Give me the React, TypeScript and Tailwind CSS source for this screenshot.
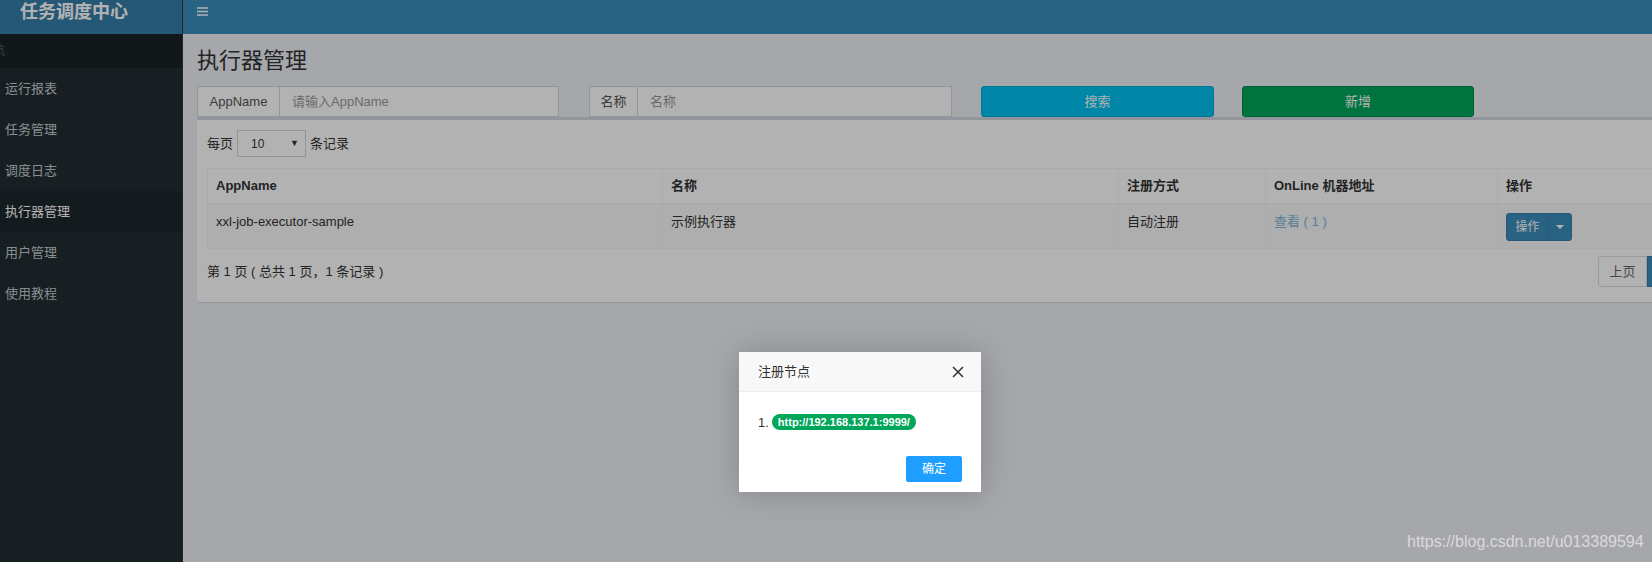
import React from 'react';

const menu = ['运行报表', '任务管理', '调度日志', '执行器管理', '用户管理', '使用教程'];

function Sidebar() {
  return (
    <aside className="flex w-[183px] shrink-0 flex-col border-r border-[#2e3a40] bg-[#222d32]">
      <div className="flex h-[34px] items-start bg-[#367fa9] pl-[20px] pt-[1px]">
        <span className="text-[18px] font-bold leading-[22px] text-white">任务调度中心</span>
      </div>
      <div className="flex h-[34px] items-center bg-[#1a2226]">
        <span className="ml-[-19px] text-[12px] text-[#4b646f]">导航</span>
      </div>
      {menu.map((m) => {
        const active = m === '执行器管理';
        return (
          <div
            key={m}
            className={
              active
                ? 'flex h-[41px] items-center bg-[#1e282c] pl-[5px] text-[13px] text-white'
                : 'flex h-[41px] items-center pl-[5px] text-[13px] text-[#c2ccd1]'
            }
          >
            {m}
          </div>
        );
      })}
    </aside>
  );
}

function InputGroup({ addon, placeholder, width, addonWidth }: { addon: string; placeholder: string; width: string; addonWidth: string }) {
  return (
    <div className={`flex h-[31px] ${width} border border-[#d2d6de] bg-white text-[13px]`}>
      <div className={`flex ${addonWidth} shrink-0 items-center justify-center border-r border-[#d2d6de] text-[#555]`}>
        {addon}
      </div>
      <div className="flex flex-1 items-center pl-[12px] text-[#999]">{placeholder}</div>
    </div>
  );
}

function ExecutorTable() {
  const th = 'border border-[#f4f4f4] px-[8px] py-[7px] text-left align-bottom font-bold';
  const td = 'border border-[#f4f4f4] px-[8px] pt-[7px] pb-[7px] align-top';
  return (
    <table className="w-[1519px] table-fixed border-collapse border border-[#f4f4f4] text-[13px] text-[#333]">
      <colgroup>
        <col className="w-[455px]" />
        <col className="w-[456px]" />
        <col className="w-[147px]" />
        <col className="w-[232px]" />
        <col className="w-[229px]" />
      </colgroup>
      <thead>
        <tr className="h-[34px] border-b-2 border-[#f4f4f4]">
          <th className={th}>AppName</th>
          <th className={th}>名称</th>
          <th className={th}>注册方式</th>
          <th className={th}>OnLine 机器地址</th>
          <th className={th}>操作</th>
        </tr>
      </thead>
      <tbody>
        <tr className="h-[45px] bg-[#f9f9f9]">
          <td className={td}>xxl-job-executor-sample</td>
          <td className={td}>示例执行器</td>
          <td className={td}>自动注册</td>
          <td className={td}>
            <span className="text-[#7fb6dc]">查看 ( 1 )</span>
          </td>
          <td className="border border-[#f4f4f4] px-[8px] pt-[8px] align-top">
            <div className="flex h-[28px] w-[66px] overflow-hidden rounded-[3px] border border-[#367fa9] bg-[#3c8dbc] text-[12px] text-white">
              <div className="flex w-[41px] items-center justify-center">操作</div>
              <div className="flex flex-1 items-center justify-center border-l border-[#367fa9]">
                <svg width="8" height="4" viewBox="0 0 8 4">
                  <path d="M0 0h8L4 4z" fill="#fff" />
                </svg>
              </div>
            </div>
          </td>
        </tr>
      </tbody>
    </table>
  );
}

function Content() {
  return (
    <main className="flex flex-1 flex-col bg-[#ecf0f5]">
      <header className="flex h-[34px] items-start bg-[#3c8dbc] pl-[14px] pt-[7px]">
        <svg width="11" height="9" viewBox="0 0 11 9">
          <path d="M0 1h11M0 4.5h11M0 8h11" stroke="#fff" strokeWidth="1.6" />
        </svg>
      </header>
      <section className="flex-1 pl-[14px]">
        <h1 className="mt-[12px] h-[30px] text-[22px] leading-[30px] text-[#333]">执行器管理</h1>
        <div className="mt-[10px] flex items-center">
          <InputGroup addon="AppName" placeholder="请输入AppName" width="w-[362px]" addonWidth="w-[82px]" />
          <div className="w-[30px]" />
          <InputGroup addon="名称" placeholder="名称" width="w-[363px]" addonWidth="w-[48px]" />
          <div className="w-[29px]" />
          <button className="h-[31px] w-[233px] rounded-[3px] border border-[#00acd6] bg-[#00c0ef] text-[13px] text-white">
            搜索
          </button>
          <div className="w-[28px]" />
          <button className="h-[31px] w-[232px] rounded-[3px] border border-[#008d4c] bg-[#00a65a] text-[13px] text-white">
            新增
          </button>
        </div>
        <div className="w-[1539px] rounded-[3px] border-t-[3px] border-[#d2d6de] bg-white px-[10px] pb-[15px] pt-[10px] shadow-[0_1px_1px_rgba(0,0,0,0.1)]">
          <div className="flex items-center text-[13px] text-[#333]">
            <span>每页</span>
            <div className="mx-[4px] flex h-[27px] w-[69px] items-center justify-between border border-[#d2d6de] pl-[13px] pr-[6px] text-[12px]">
              <span>10</span>
              <span className="text-[9px]">▼</span>
            </div>
            <span>条记录</span>
          </div>
          <div className="mt-[11px]">
            <ExecutorTable />
          </div>
          <div className="mt-[7px] flex items-center">
            <span className="text-[13px] text-[#333]">第 1 页 ( 总共 1 页，1 条记录 )</span>
            <div className="ml-auto flex h-[31px] text-[13px]">
              <div className="flex w-[49px] items-center justify-center rounded-l-[3px] border border-[#ddd] text-[#666]">上页</div>
              <div className="flex w-[30px] items-center justify-center border border-[#367fa9] bg-[#3c8dbc] text-white">1</div>
              <div className="flex w-[49px] items-center justify-center rounded-r-[3px] border border-[#ddd] text-[#666]">下页</div>
            </div>
          </div>
        </div>
      </section>
    </main>
  );
}

function RegistryDialog() {
  return (
    <div className="absolute left-[739px] top-[352px] flex h-[140px] w-[242px] flex-col bg-white shadow-[1px_1px_30px_rgba(0,0,0,0.2)]">
      <div className="flex h-[40px] items-center justify-between border-b border-[#eee] bg-[#f8f8f8] pl-[19px] pr-[17px] text-[13px] text-[#333]">
        <span>注册节点</span>
        <svg width="12" height="12" viewBox="0 0 12 12">
          <path d="M1 1l10 10M11 1L1 11" stroke="#333" strokeWidth="1.5" />
        </svg>
      </div>
      <div className="flex flex-1 items-start pl-[19px] pt-[22px] text-[13px] text-[#333]">
        <span className="leading-[17px]">1.</span>
        <span className="ml-[3px] flex h-[16px] items-center rounded-[10px] bg-[#00a65a] px-[6px] text-[11px] font-bold text-white">
          http://192.168.137.1:9999/
        </span>
      </div>
      <div className="flex justify-end pb-[10px] pr-[19px]">
        <button className="h-[26px] w-[56px] rounded-[2px] border border-[#1e9fff] bg-[#1e9fff] text-[12px] text-white">
          确定
        </button>
      </div>
    </div>
  );
}

export default function App() {
  return (
    <div className="relative flex h-[562px] w-[1652px] overflow-hidden bg-[#ecf0f5] font-['Liberation_Sans','Noto_Sans_CJK_SC',sans-serif]">
      <Sidebar />
      <Content />
      {/* layer shade */}
      <div className="absolute left-0 top-0 h-[562px] w-[1652px] bg-[rgba(0,0,0,0.3)]" />
      <RegistryDialog />
      <span className="absolute left-[1407px] top-[532px] text-[16px] leading-[20px] text-[#dadada]">
        https://blog.csdn.net/u013389594
      </span>
    </div>
  );
}
